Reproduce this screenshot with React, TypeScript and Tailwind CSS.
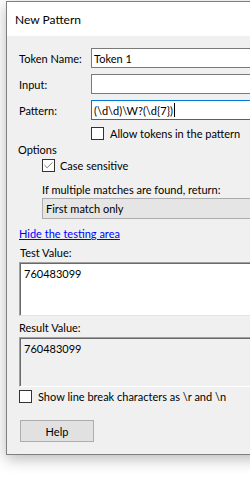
import { Check } from "lucide-react";

const font = "font-['Lato','Liberation_Sans',sans-serif] text-[11px] leading-[15px] text-black";

function Field({ label, value, focused }: { label: string; value: string; focused?: boolean }) {
  return (
    <div className="flex h-[20px] items-center">
      <span className="w-[72px] shrink-0">{label}</span>
      <div
        className={
          "flex h-[20px] flex-1 items-center border bg-white pl-[2px] " +
          (focused ? "border-[#0078d7]" : "border-[#7a7a7a]")
        }
      >
        {value}
        {focused && <span className="ml-[1px] h-[14px] w-px bg-black" />}
      </div>
    </div>
  );
}

function Box({ checked }: { checked?: boolean }) {
  return (
    <span className="flex h-[13px] w-[13px] shrink-0 items-center justify-center border border-[#333333] bg-white">
      {checked && <Check size={11} strokeWidth={1.4} className="text-[#333333]" />}
    </span>
  );
}

export default function App() {
  return (
    <div className={"h-[479px] w-[250px] overflow-hidden bg-white " + font}>
      <div className="ml-[6px] mt-[1px] flex h-[454px] w-[320px] flex-col border border-[#7f7f7f] bg-[#f0f0f0] shadow-[0_4px_14px_rgba(0,0,0,0.28)]">
        <div className="flex h-[34px] shrink-0 items-center bg-white pl-[8px] pt-[1px] text-[12px]">New Pattern</div>

        <div className="flex flex-col pl-[12px] pr-[12px] pt-[12px]">
          <div className="flex flex-col gap-[6px]">
            <Field label="Token Name:" value="Token 1" />
            <Field label="Input:" value="" />
            <Field label="Pattern:" value="(\d\d)\W?(\d{7})" focused />
          </div>

          <div className="ml-[72px] mt-[6px] flex h-[15px] items-center gap-[6px]">
            <Box />
            <span>Allow tokens in the pattern</span>
          </div>

          <div className="ml-[-1px] mt-[1px] h-[15px]">Options</div>

          <div className="ml-[23px] mt-[1px] flex h-[15px] items-center gap-[5px]">
            <Box checked />
            <span>Case sensitive</span>
          </div>

          <div className="ml-[23px] mt-[9px] h-[15px]">If multiple matches are found, return:</div>

          <div className="ml-[23px] mt-[1px] flex h-[21px] items-center border border-[#acacac] bg-[#e5e5e5] pl-[3px]">
            First match only
          </div>

          <a className="mt-[7px] h-[15px] self-start text-[#0000ff] underline">Hide the testing area</a>

          <div className="ml-[1px] mt-[4px] h-[15px]">Test Value:</div>

          <div className="mt-[2px] h-[54px] border-b border-l border-r border-t border-b-[#e3e3e3] border-l-[#a0a0a0] border-r-[#e3e3e3] border-t-[#a0a0a0] bg-white pl-[4px] pt-[3px] shadow-[inset_1px_1px_0_#696969]">
            760483099
          </div>

          <div className="mt-[4px] h-[15px]">Result Value:</div>

          <div className="mt-[2px] h-[50px] border-b border-l border-r border-t border-b-[#ffffff] border-l-[#a0a0a0] border-r-[#ffffff] border-t-[#a0a0a0] bg-[#f0f0f0] pl-[4px] pt-[3px] shadow-[inset_1px_1px_0_#696969]">
            760483099
          </div>

          <div className="mt-[2px] flex h-[15px] items-center gap-[6px]">
            <Box />
            <span>Show line break characters as \r and \n</span>
          </div>

          <button className="ml-[1px] mt-[16px] flex h-[22px] w-[74px] items-center justify-center border border-[#adadad] bg-[#e1e1e1]">
            Help
          </button>
        </div>
      </div>
    </div>
  );
}
